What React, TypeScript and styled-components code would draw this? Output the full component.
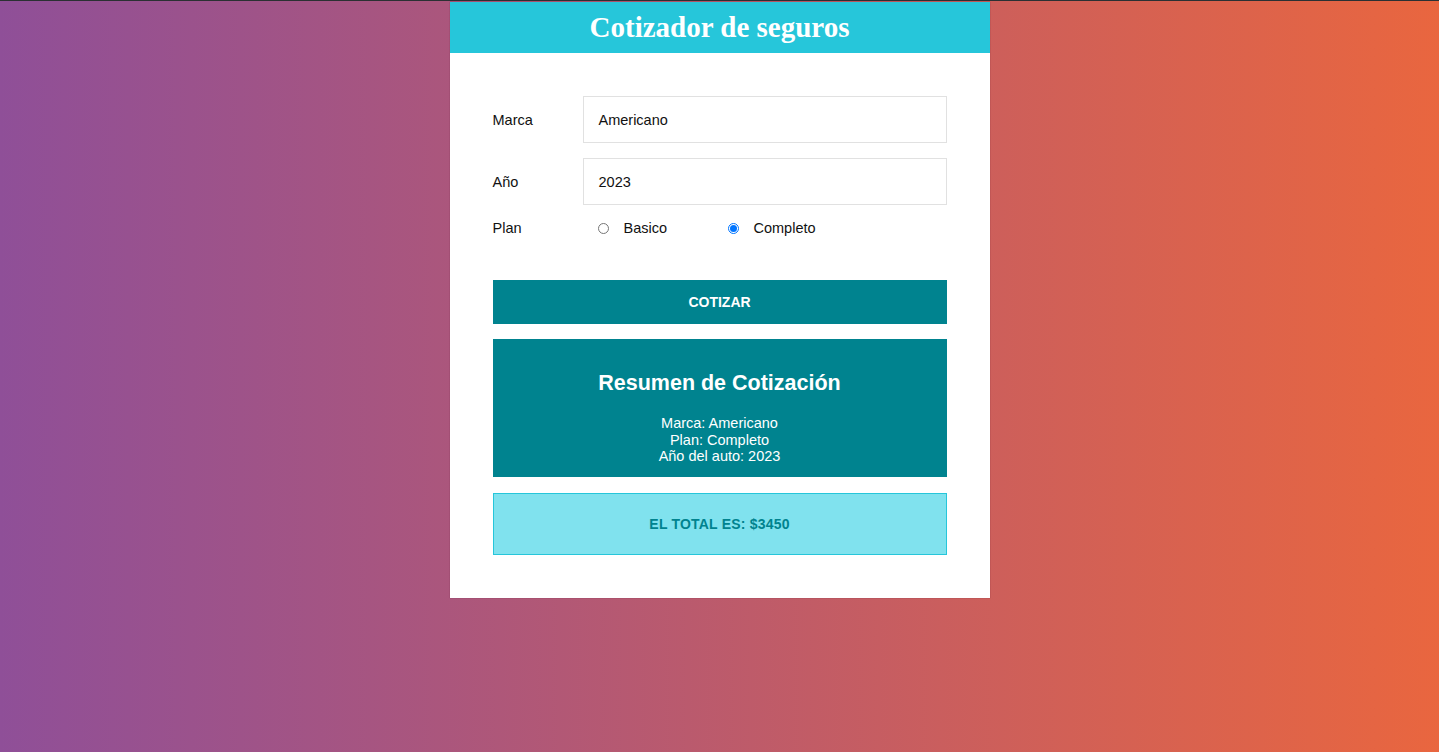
import React from "react";
import styled, { createGlobalStyle } from "styled-components";

const GlobalStyle = createGlobalStyle`
  * { box-sizing: border-box; }
  html, body { margin: 0; padding: 0; }
  body {
    min-height: 100vh;
    background: linear-gradient(to right, #8f4f98, #e9663f);
    border-top: 1px solid #2b3033;
    font-family: "Liberation Sans", Arial, sans-serif;
  }
`;

const Page = styled.div`
  display: flex;
  justify-content: center;
  padding-top: 1px;
`;

const Card = styled.div`
  width: 540px;
  background: #fff;
  box-shadow: 0 0 1px rgba(90, 20, 50, 0.6);
`;

const Header = styled.header`
  height: 51px;
  background: #26c6da;
  display: flex;
  align-items: center;
  justify-content: center;
`;

const Title = styled.h1`
  margin: 0;
  color: #fff;
  font-family: "Liberation Serif", "Times New Roman", serif;
  font-weight: 700;
  font-size: 29px;
`;

const Body = styled.div`
  padding: 43px 43px 43px;
  display: flex;
  flex-direction: column;
`;

const Field = styled.div<{ $mt?: number; $mb?: number }>`
  display: flex;
  align-items: center;
  margin-top: ${(p) => p.$mt ?? 0}px;
  margin-bottom: ${(p) => p.$mb ?? 0}px;
`;

const Label = styled.label`
  flex: 0 0 90px;
  font-size: 14.5px;
  color: #111;
`;

const Input = styled.div`
  flex: 1;
  height: 47px;
  border: 1px solid #e1e1e1;
  display: flex;
  align-items: center;
  padding-left: 15px;
  font-size: 14.5px;
  color: #111;
`;

const RadioGroup = styled.div`
  display: flex;
  align-items: center;
  padding-left: 15px;
`;

const RadioOption = styled.div<{ $w?: number }>`
  display: flex;
  align-items: center;
  width: ${(p) => p.$w ?? 130}px;
  font-size: 14.5px;
  color: #111;
`;

const RadioCircle = styled.span<{ $checked?: boolean }>`
  width: 11px;
  height: 11px;
  border-radius: 50%;
  margin-right: 15px;
  border: 1px solid ${(p) => (p.$checked ? "#0075ff" : "#767676")};
  background: #fff;
  display: flex;
  align-items: center;
  justify-content: center;
  &::after {
    content: "";
    display: ${(p) => (p.$checked ? "block" : "none")};
    width: 7px;
    height: 7px;
    border-radius: 50%;
    background: #0075ff;
  }
`;

const Button = styled.button`
  margin-top: 44px;
  height: 44px;
  border: none;
  background: #00838f;
  color: #fff;
  font-family: "Liberation Sans", Arial, sans-serif;
  font-weight: 700;
  font-size: 14px;
  text-transform: uppercase;
`;

const Summary = styled.div`
  margin-top: 15px;
  height: 138px;
  background: #00838f;
  color: #fff;
  text-align: center;
  padding-top: 32px;
`;

const SummaryTitle = styled.h2`
  margin: 0 0 19px;
  font-size: 21.5px;
  font-weight: 700;
`;

const SummaryLine = styled.p`
  margin: 0;
  font-size: 14.5px;
  line-height: 16.5px;
`;

const Total = styled.div`
  margin-top: 16px;
  height: 62px;
  background: #80e2ee;
  border: 1px solid #26c6da;
  display: flex;
  align-items: center;
  justify-content: center;
  color: #00838f;
  font-weight: 700;
  font-size: 14px;
  text-transform: uppercase;
  letter-spacing: 0.2px;
`;

export default function App() {
  return (
    <>
      <GlobalStyle />
      <Page>
        <Card>
          <Header>
            <Title>Cotizador de seguros</Title>
          </Header>
          <Body>
            <Field $mb={15}>
              <Label>Marca</Label>
              <Input>Americano</Input>
            </Field>
            <Field>
              <Label>Año</Label>
              <Input>2023</Input>
            </Field>
            <Field $mt={15}>
              <Label>Plan</Label>
              <RadioGroup>
                <RadioOption>
                  <RadioCircle />
                  Basico
                </RadioOption>
                <RadioOption>
                  <RadioCircle $checked />
                  Completo
                </RadioOption>
              </RadioGroup>
            </Field>
            <Button>Cotizar</Button>
            <Summary>
              <SummaryTitle>Resumen de Cotización</SummaryTitle>
              <SummaryLine>Marca: Americano</SummaryLine>
              <SummaryLine>Plan: Completo</SummaryLine>
              <SummaryLine>Año del auto: 2023</SummaryLine>
            </Summary>
            <Total>El total es: $3450</Total>
          </Body>
        </Card>
      </Page>
    </>
  );
}
